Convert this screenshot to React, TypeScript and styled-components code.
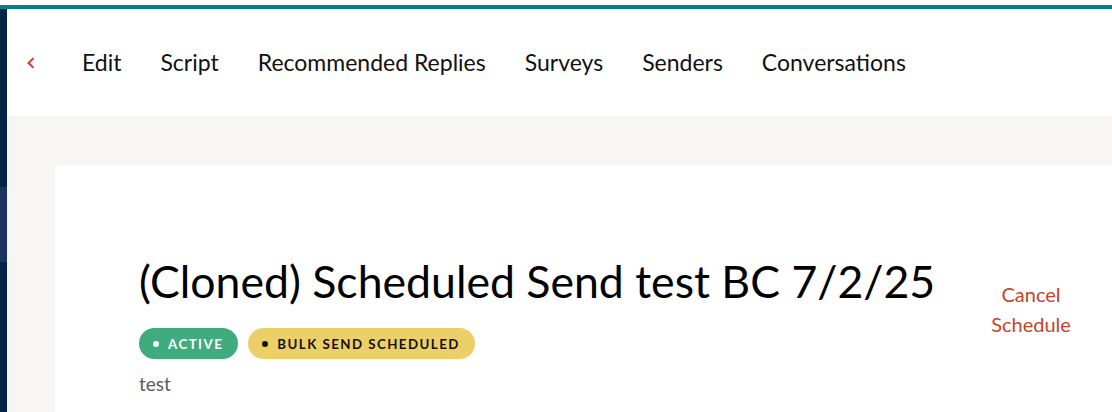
import React from "react";
import styled, { createGlobalStyle } from "styled-components";

const Global = createGlobalStyle`
  html, body { margin: 0; padding: 0; background: #ffffff; }
  body { font-family: "Lato", "Noto Sans", sans-serif; overflow: hidden; }
  #root { height: 412px; }
`;

const Page = styled.div`
  height: 412px;
  padding-top: 5px;
  box-sizing: border-box;
  display: flex;
  flex-direction: column;
  background: #ffffff;
`;

const AccentBar = styled.div`
  height: 4px;
  background: #00818a;
  flex: none;
`;

const Body = styled.div`
  flex: 1;
  display: flex;
  min-height: 0;
`;

const Sidebar = styled.aside`
  width: 7px;
  flex: none;
  background: #022447;
  display: flex;
  flex-direction: column;
  padding-top: 178px;
`;

const SideItem = styled.div<{ $active?: boolean }>`
  height: 75px;
  background: ${(p) => (p.$active ? "#1c3360" : "transparent")};
`;

const Main = styled.main`
  flex: 1;
  display: flex;
  flex-direction: column;
  min-width: 0;
`;

const Nav = styled.nav`
  height: 107px;
  flex: none;
  display: flex;
  align-items: center;
  padding-left: 19px;
  gap: 39px;
  background: #ffffff;
`;

const BackButton = styled.button`
  border: 0;
  background: none;
  padding: 0;
  margin-right: 7px;
  display: flex;
  align-items: center;
  color: #c5432a;
  cursor: pointer;
`;

const NavLink = styled.a`
  font-size: 23px;
  color: #111111;
  text-decoration: none;
  line-height: 1;
`;

const Content = styled.div`
  flex: 1;
  background: #f7f6f3;
  padding: 49px 0 0 48px;
  display: flex;
  min-height: 0;
`;

const Card = styled.section`
  flex: 1;
  background: #ffffff;
  border-radius: 6px 0 0 0;
  padding: 86px 0 0 84px;
  display: flex;
  justify-content: space-between;
  align-items: flex-start;
`;

const Info = styled.div`
  display: flex;
  flex-direction: column;
`;

const Title = styled.h1`
  margin: 0;
  font-size: 44.6px;
  font-weight: 400;
  color: #000000;
  line-height: 60px;
  white-space: nowrap;
`;

const Badges = styled.div`
  display: flex;
  gap: 10px;
  margin-top: 17px;
`;

const Badge = styled.span<{ $bg: string; $fg: string }>`
  height: 31px;
  border-radius: 16px;
  background: ${(p) => p.$bg};
  color: ${(p) => p.$fg};
  display: inline-flex;
  align-items: center;
  gap: 9px;
  padding: 0 15px 0 14px;
  font-size: 13.3px;
  font-weight: 700;
  letter-spacing: 1.45px;
`;

const Dot = styled.span`
  width: 6px;
  height: 6px;
  border-radius: 50%;
  background: currentColor;
`;

const Description = styled.p`
  margin: 14px 0 0;
  font-size: 19px;
  line-height: 1.2;
  color: #5c5c5c;
`;

const CancelButton = styled.button`
  border: 0;
  background: none;
  margin: 28px 36px 0 0;
  padding: 0;
  width: 90px;
  font-family: inherit;
  font-size: 20px;
  line-height: 30px;
  color: #c5432a;
  text-align: center;
  cursor: pointer;
`;

export default function App() {
  return (
    <>
      <Global />
      <Page>
        <AccentBar />
        <Body>
          <Sidebar>
            <SideItem $active />
          </Sidebar>
          <Main>
            <Nav>
              <BackButton aria-label="Back">
                <svg width="10" height="12" viewBox="0 0 10 12" fill="none">
                  <path d="M7.5 1.2L2.5 6L7.5 10.8" stroke="currentColor" strokeWidth="2" />
                </svg>
              </BackButton>
              <NavLink>Edit</NavLink>
              <NavLink>Script</NavLink>
              <NavLink>Recommended Replies</NavLink>
              <NavLink>Surveys</NavLink>
              <NavLink>Senders</NavLink>
              <NavLink>Conversations</NavLink>
            </Nav>
            <Content>
              <Card>
                <Info>
                  <Title>(Cloned) Scheduled Send test BC 7/2/25</Title>
                  <Badges>
                    <Badge $bg="#40ab7f" $fg="#ffffff">
                      <Dot />
                      ACTIVE
                    </Badge>
                    <Badge $bg="#edcf67" $fg="#111111">
                      <Dot />
                      BULK SEND SCHEDULED
                    </Badge>
                  </Badges>
                  <Description>test</Description>
                </Info>
                <CancelButton>Cancel Schedule</CancelButton>
              </Card>
            </Content>
          </Main>
        </Body>
      </Page>
    </>
  );
}
